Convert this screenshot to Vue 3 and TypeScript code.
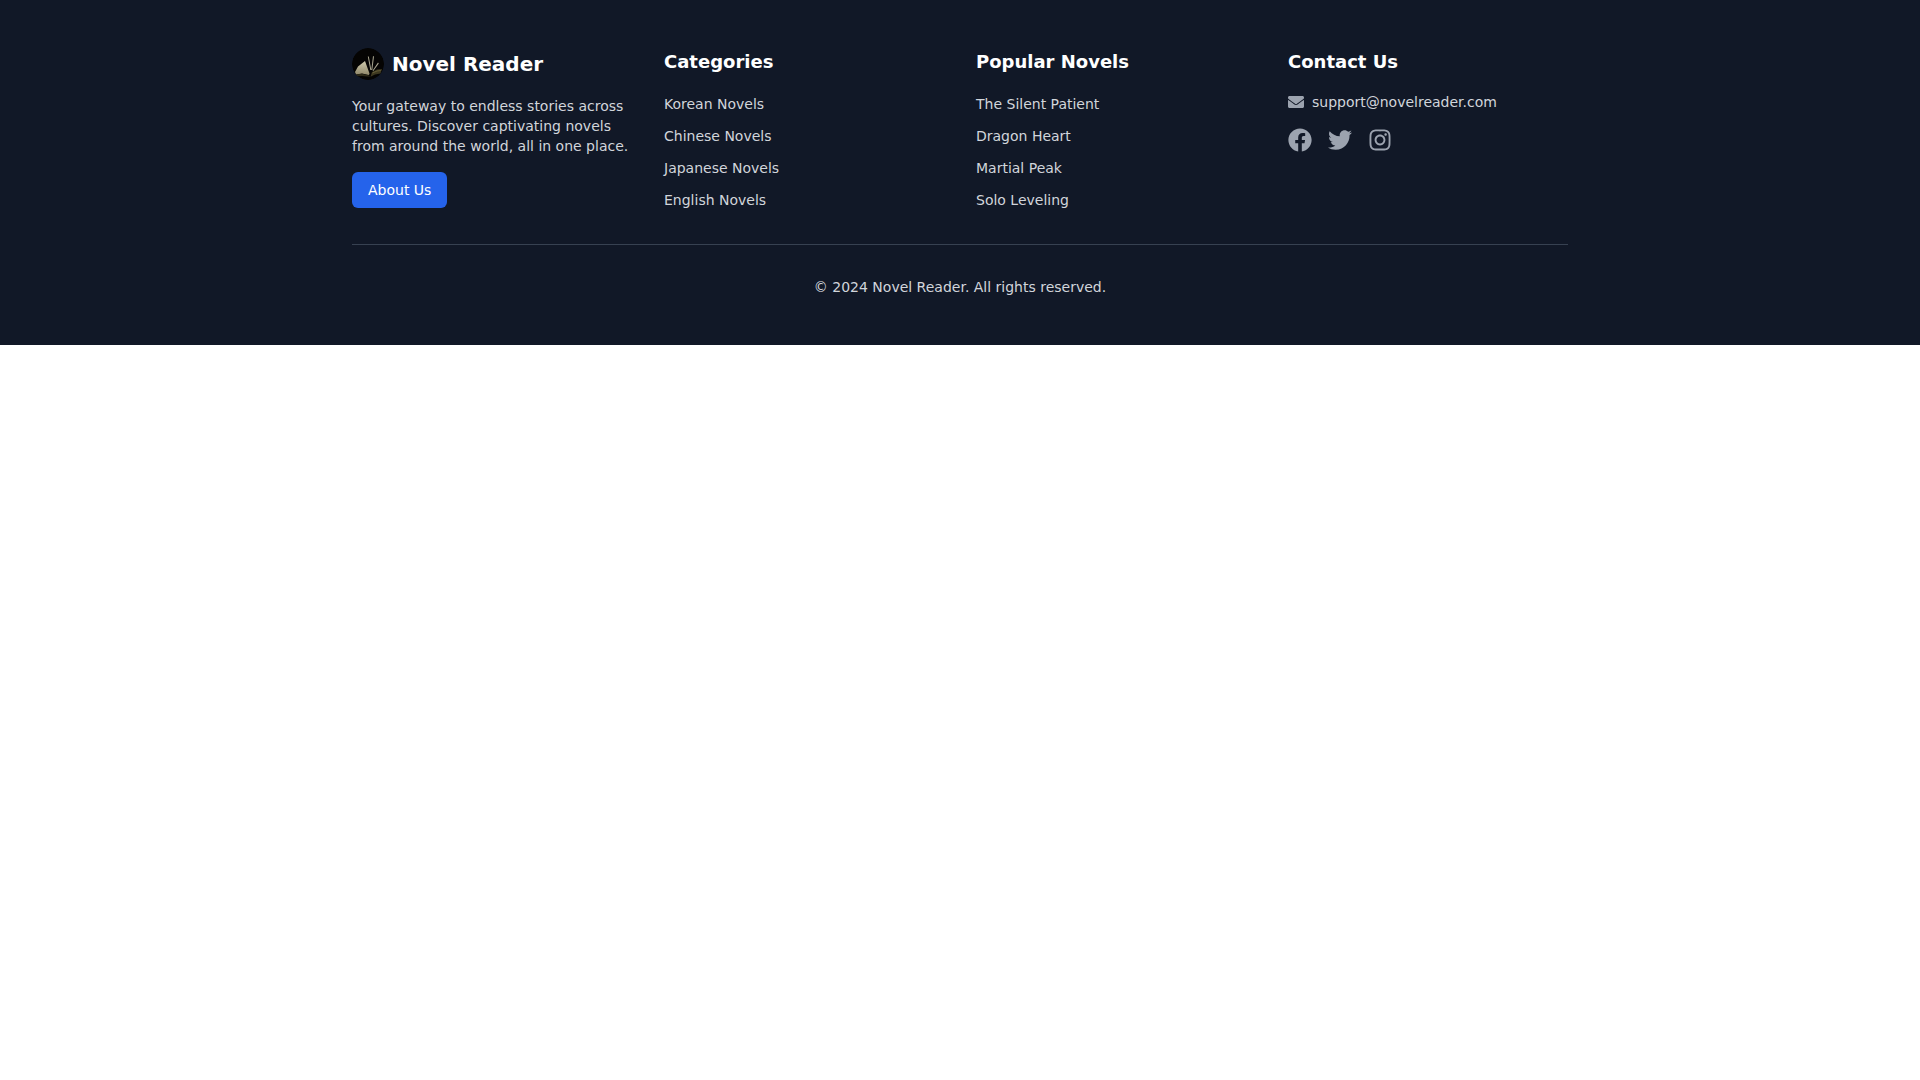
<script setup lang="ts">
type FooterColumn = {
    title: string;
    links: string[];
};

const columns: FooterColumn[] = [
    { title: 'Categories', links: ['Korean Novels', 'Chinese Novels', 'Japanese Novels', 'English Novels'] },
    { title: 'Popular Novels', links: ['The Silent Patient', 'Dragon Heart', 'Martial Peak', 'Solo Leveling'] }
];
</script>

<template>
    <footer class="footer">
        <div class="footer__inner">
            <div class="footer__grid">
                <div>
                    <div class="brand">
                        <!-- 로고: 어두운 배경 위에 펼쳐진 책 -->
                        <svg class="brand__logo" viewBox="0 0 32 32" aria-hidden="true">
                            <defs>
                                <linearGradient id="page" x1="0" y1="0" x2="0" y2="1">
                                    <stop offset="0" stop-color="#cfc9ad" />
                                    <stop offset="1" stop-color="#8f8769" />
                                </linearGradient>
                            </defs>
                            <circle cx="16" cy="16" r="16" fill="#050403" />
                            <path d="M3 24 6 18.500 13 13 17.500 25.500 17 27 10 25.500 4 26.500z" fill="url(#page)" />
                            <path d="M3.500 26.500 10 25.800 17 27.500 18 28.800 10 28 5 28.200z" fill="#2e2a18" />
                            <path d="M15.800 8.500 16.800 8.500 19.300 22 18.300 22zM21 8 22 8.500 20.300 22 19.300 22zM26 14.500 26.800 15.500 21.300 23 20.600 22.500z" fill="#a9a590" />
                            <path d="M20 24 25 21.500 30 21 28.500 25.500 23 26.500 18.500 28.800z" fill="#3d3820" />
                            <path d="M20.500 25 25 23 28.800 22.500" stroke="#7f7546" stroke-width=".6" fill="none" />
                        </svg>
                        <span class="brand__name">Novel Reader</span>
                    </div>
                    <p class="brand__text">Your gateway to endless stories across cultures. Discover captivating novels from around the world, all in one place.</p>
                    <a href="#" class="about-btn">About Us</a>
                </div>

                <div v-for="col in columns" :key="col.title">
                    <h3 class="col-title">{{ col.title }}</h3>
                    <ul class="col-links">
                        <li v-for="link in col.links" :key="link">
                            <a href="#">{{ link }}</a>
                        </li>
                    </ul>
                </div>

                <div>
                    <h3 class="col-title">Contact Us</h3>
                    <div class="contact">
                        <svg class="contact__icon" viewBox="0 0 512 512" fill="currentColor" aria-hidden="true">
                            <path d="M502.3 190.8c3.900-3.100 9.700-.2 9.700 4.700V400c0 26.500-21.500 48-48 48H48c-26.500 0-48-21.500-48-48V195.600c0-5 5.700-7.800 9.700-4.700 22.400 17.400 52.100 39.500 154.100 113.600 21.100 15.400 56.700 47.800 92.200 47.600 35.700.3 72-32.800 92.300-47.600 102-74.100 131.600-96.300 154-113.700zM256 320c23.200.4 56.600-29.200 73.400-41.400 132.700-96.300 142.800-104.700 173.400-128.700 5.800-4.500 9.200-11.500 9.200-18.900v-19c0-26.500-21.500-48-48-48H48C21.500 64 0 85.500 0 112v19c0 7.400 3.400 14.300 9.200 18.900 30.600 23.900 40.700 32.400 173.400 128.700 16.800 12.200 50.200 41.800 73.400 41.400z" />
                        </svg>
                        <span>support@novelreader.com</span>
                    </div>
                    <div class="social">
                        <a href="#" aria-label="Facebook">
                            <svg viewBox="0 0 512 512" fill="currentColor">
                                <path d="M504 256C504 119 393 8 256 8S8 119 8 256c0 123.780 90.690 226.380 209.250 245V327.690h-63V256h63v-54.640c0-62.150 37-96.480 93.670-96.480 27.140 0 55.520 4.840 55.520 4.840v61h-31.280c-30.800 0-40.410 19.120-40.410 38.730V256h68.780l-11 71.690h-57.780V501C413.310 482.380 504 379.780 504 256z" />
                            </svg>
                        </a>
                        <a href="#" aria-label="Twitter">
                            <svg viewBox="0 0 512 512" fill="currentColor">
                                <path d="M459.370 151.716c.325 4.548.325 9.097.325 13.645 0 138.720-105.583 298.558-298.558 298.558-59.452 0-114.680-17.219-161.137-47.106 8.447.974 16.568 1.299 25.340 1.299 49.055 0 94.213-16.568 130.274-44.832-46.132-.975-84.792-31.188-98.112-72.772 6.498.974 12.995 1.624 19.818 1.624 9.421 0 18.843-1.300 27.614-3.573-48.081-9.747-84.143-51.980-84.143-102.985v-1.299c13.969 7.797 30.214 12.670 47.431 13.319-28.264-18.843-46.781-51.005-46.781-87.391 0-19.492 5.197-37.360 14.294-52.954 51.655 63.675 129.300 105.258 216.365 109.807-1.624-7.797-2.599-15.918-2.599-24.040 0-57.828 46.782-104.934 104.934-104.934 30.213 0 57.502 12.670 76.670 33.137 23.715-4.548 46.456-13.320 66.599-25.340-7.798 24.366-24.366 44.833-46.132 57.827 21.117-2.273 41.584-8.122 60.426-16.243-14.292 20.791-32.161 39.308-52.628 54.253z" />
                            </svg>
                        </a>
                        <a href="#" aria-label="Instagram">
                            <svg class="social__insta" viewBox="0 0 448 512" fill="currentColor">
                                <path d="M224.100 141c-63.600 0-114.900 51.300-114.900 114.900s51.300 114.900 114.900 114.900S339 319.500 339 255.900 287.700 141 224.100 141zm0 189.600c-41.100 0-74.700-33.500-74.700-74.700s33.500-74.700 74.700-74.700 74.700 33.500 74.700 74.700-33.600 74.700-74.700 74.700zm146.400-194.300c0 14.900-12 26.800-26.800 26.800-14.900 0-26.800-12-26.800-26.800s12-26.800 26.800-26.800 26.800 12 26.800 26.800zm76.100 27.200c-1.700-35.900-9.900-67.700-36.200-93.900-26.200-26.200-58-34.400-93.900-36.200-37-2.100-147.900-2.100-184.900 0-35.800 1.700-67.600 9.900-93.900 36.100s-34.400 58-36.200 93.900c-2.100 37-2.100 147.900 0 184.900 1.700 35.900 9.900 67.700 36.200 93.900s58 34.400 93.900 36.200c37 2.100 147.900 2.100 184.900 0 35.900-1.700 67.700-9.900 93.900-36.200 26.200-26.200 34.400-58 36.200-93.900 2.100-37 2.100-147.800 0-184.800zM398.800 388c-7.800 19.600-22.900 34.700-42.600 42.600-29.500 11.700-99.500 9-132.100 9s-102.700 2.600-132.100-9c-19.600-7.800-34.700-22.900-42.600-42.600-11.700-29.500-9-99.500-9-132.100s-2.600-102.700 9-132.100c7.800-19.600 22.900-34.700 42.600-42.600 29.500-11.700 99.500-9 132.100-9s102.700-2.600 132.100 9c19.600 7.800 34.700 22.900 42.600 42.600 11.700 29.500 9 99.500 9 132.100s2.700 102.700-9 132.100z" />
                            </svg>
                        </a>
                    </div>
                </div>
            </div>

            <div class="copyright">© 2024 Novel Reader. All rights reserved.</div>
        </div>
    </footer>
</template>

<style scoped>
.footer {
    background: #111827;
    color: #ffffff;
    padding: 48px 0;
    font-family: 'DejaVu Sans', sans-serif;
    font-size: 16px;
    line-height: 24px;
}

.footer__inner {
    max-width: 1280px;
    margin: 0 auto;
    padding: 0 32px;
    box-sizing: border-box;
}

.footer__grid {
    display: grid;
    grid-template-columns: repeat(4, 1fr);
    gap: 32px;
}

.brand {
    display: flex;
    align-items: center;
    gap: 8px;
    margin-bottom: 16px;
}

.brand__logo {
    width: 32px;
    height: 32px;
    border-radius: 50%;
}

.brand__name {
    font-size: 20px;
    line-height: 28px;
    font-weight: 700;
}

.brand__text {
    margin: 0 0 16px;
    font-size: 14px;
    line-height: 20px;
    color: #d1d5db;
}

.about-btn {
    display: inline-block;
    padding: 8px 16px;
    border-radius: 6px;
    background: #2563eb;
    color: #ffffff;
    font-size: 14px;
    line-height: 20px;
    text-decoration: none;
}

.col-title {
    margin: 0 0 16px;
    font-size: 18px;
    line-height: 28px;
    font-weight: 700;
}

.col-links {
    display: grid;
    gap: 8px;
    margin: 0;
    padding: 0;
    list-style: none;
}

.col-links a {
    color: #d1d5db;
    font-size: 14px;
    line-height: 20px;
    text-decoration: none;
}

.contact {
    display: flex;
    align-items: center;
    gap: 8px;
    font-size: 14px;
    line-height: 20px;
    color: #d1d5db;
}

.contact__icon {
    width: 16px;
    height: 16px;
    color: #9ca3af;
}

.social {
    display: flex;
    gap: 16px;
    margin-top: 16px;
    color: #9ca3af;
}

.social a {
    display: flex;
    color: inherit;
}

.social svg {
    width: 24px;
    height: 24px;
}

.social__insta {
    width: 21px;
}

.copyright {
    margin-top: 32px;
    padding-top: 32px;
    border-top: 1px solid #374151;
    text-align: center;
    font-size: 14px;
    line-height: 20px;
    color: #d1d5db;
}
</style>

<style>
body {
    margin: 0;
    background: #ffffff;
}
</style>
